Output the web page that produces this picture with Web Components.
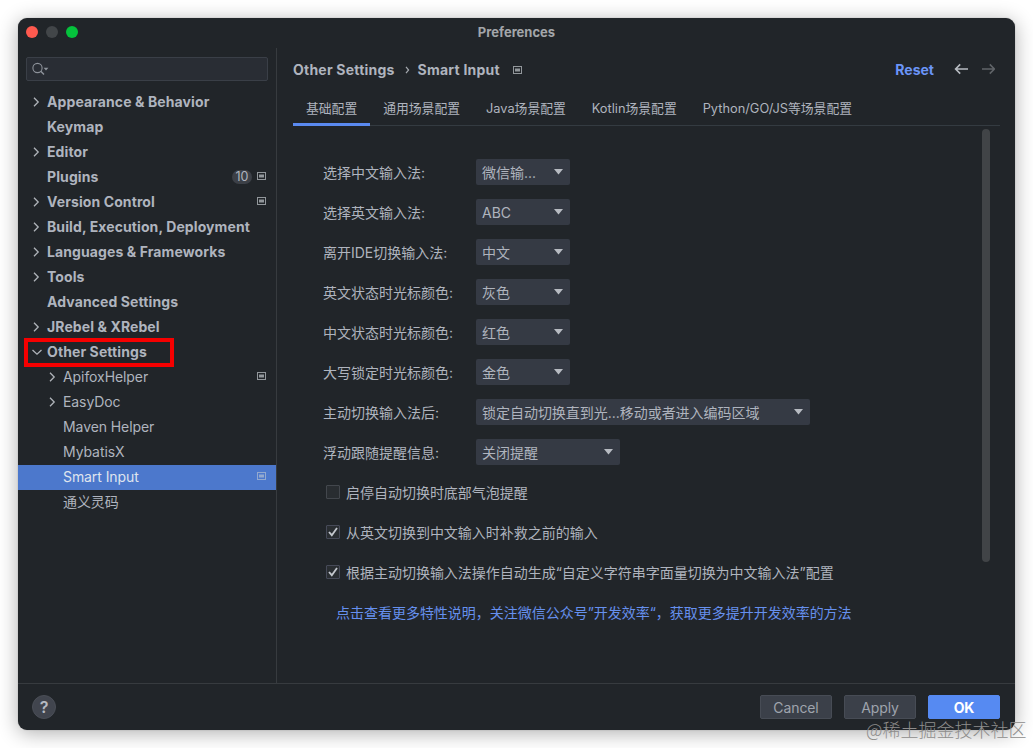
<!DOCTYPE html>
<html lang="zh-CN">
<head>
<meta charset="utf-8">
<title>Preferences</title>
<style>
  body {
    margin: 0;
    width: 1033px;
    height: 748px;
    overflow: hidden;
    position: relative;
    background: #fff;
    color: #afb4be;
    font: 14px/20px Inter, "Noto Sans CJK SC", sans-serif;
  }
</style>
</head>
<body>
<preferences-window>
  <settings-tree slot="sidebar">
    <tree-item arrow="right">Appearance &amp; Behavior</tree-item>
    <tree-item>Keymap</tree-item>
    <tree-item arrow="right">Editor</tree-item>
    <tree-item badge="10" project>Plugins</tree-item>
    <tree-item arrow="right" project>Version Control</tree-item>
    <tree-item arrow="right">Build, Execution, Deployment</tree-item>
    <tree-item arrow="right">Languages &amp; Frameworks</tree-item>
    <tree-item arrow="right">Tools</tree-item>
    <tree-item>Advanced Settings</tree-item>
    <tree-item arrow="right">JRebel &amp; XRebel</tree-item>
    <tree-item arrow="down" marked>Other Settings</tree-item>
    <tree-item child arrow="right" project>ApifoxHelper</tree-item>
    <tree-item child arrow="right">EasyDoc</tree-item>
    <tree-item child>Maven Helper</tree-item>
    <tree-item child>MybatisX</tree-item>
    <tree-item child selected project>Smart Input</tree-item>
    <tree-item child>通义灵码</tree-item>
  </settings-tree>

  <page-header slot="main"></page-header>
  <tab-bar slot="main">
    <tab-item active>基础配置</tab-item>
    <tab-item>通用场景配置</tab-item>
    <tab-item>Java场景配置</tab-item>
    <tab-item>Kotlin场景配置</tab-item>
    <tab-item>Python/GO/JS等场景配置</tab-item>
  </tab-bar>
  <settings-form slot="main">
    <select-row label="选择中文输入法:">微信输...</select-row>
    <select-row label="选择英文输入法:">ABC</select-row>
    <select-row label="离开IDE切换输入法:">中文</select-row>
    <select-row label="英文状态时光标颜色:">灰色</select-row>
    <select-row label="中文状态时光标颜色:">红色</select-row>
    <select-row label="大写锁定时光标颜色:">金色</select-row>
    <select-row label="主动切换输入法后:" style="--w:334px">锁定自动切换直到光...移动或者进入编码区域</select-row>
    <select-row label="浮动跟随提醒信息:" style="--w:144px">关闭提醒</select-row>
    <check-row>启停自动切换时底部气泡提醒</check-row>
    <check-row checked>从英文切换到中文输入时补救之前的输入</check-row>
    <check-row checked>根据主动切换输入法操作自动生成“自定义字符串字面量切换为中文输入法”配置</check-row>
    <link-row>点击查看更多特性说明，关注微信公众号”开发效率“，获取更多提升开发效率的方法</link-row>
  </settings-form>

  <push-button slot="actions">Cancel</push-button>
  <push-button slot="actions">Apply</push-button>
  <push-button slot="actions" primary>OK</push-button>
</preferences-window>
<water-mark>@稀土掘金技术社区</water-mark>

<script>
const projectIcon = `
  <svg class="project" width="9" height="8" viewBox="0 0 9 8">
    <rect x=".5" y=".5" width="8" height="7" fill="none" stroke="currentColor"/>
    <rect x="2" y="2.5" width="5" height="3" fill="currentColor"/>
  </svg>`;

// Every element renders its template once, when it is connected
class BaseElement extends HTMLElement {
  connectedCallback() {
    if (this.shadowRoot) return;
    this.attachShadow({ mode: "open" });
    this.shadowRoot.innerHTML = `<style>* { box-sizing: border-box; }${this.css()}</style>${this.html()}`;
  }
  css() {
    return "";
  }
  html() {
    return "<slot></slot>";
  }
}

class PreferencesWindow extends BaseElement {
  css() {
    return `
    :host {
      display: flex;
      flex-direction: column;
      box-sizing: border-box;
      width: 997px;
      height: 712px;
      margin: 18px;
      border-radius: 9px;
      background: #212529;
      box-shadow: 0 0 1px rgba(0, 0, 0, .4), 0 3px 20px rgba(0, 0, 0, .32);
    }
    header {
      display: grid;
      grid-template-columns: 1fr auto 1fr;
      align-items: center;
      height: 30px;
      flex: none;
      padding: 0 8px;
    }
    .lights { display: flex; gap: 8px; margin-top: -2px; }
    .lights i { width: 12px; height: 12px; border-radius: 50%; background: #ff5a4f; }
    .lights i:nth-child(2) { background: #424649; }
    .lights i:nth-child(3) { background: #05c23c; }
    h1 {
      margin: -3px 0 0;
      color: #a3a6aa;
      font-size: 13px;
      font-weight: 700;
    }
    .body { display: flex; flex: 1; min-height: 0; }
    aside { width: 259px; border-right: 1px solid #373b3f; }
    main { display: flex; flex-direction: column; flex: 1; min-width: 0; padding: 0 15px 0 16px; }
    footer {
      display: flex;
      align-items: center;
      gap: 12px;
      flex: none;
      height: 47px;
      padding: 0 15px 0 14px;
      border-top: 1px solid #373b3f;
    }
    .help {
      width: 24px;
      height: 24px;
      margin-right: auto;
      border: 1px solid #4a4e56;
      border-radius: 50%;
      background: #41454e;
      color: #b5bac2;
      font-size: 16px;
      font-weight: 600;
      line-height: 22px;
      text-align: center;
    }
    `;
  }
  html() {
    return `
    <header>
      <div class="lights"><i></i><i></i><i></i></div>
      <h1>Preferences</h1>
    </header>
    <div class="body">
      <aside><slot name="sidebar"></slot></aside>
      <main><slot name="main"></slot></main>
    </div>
    <footer>
      <div class="help">?</div>
      <slot name="actions"></slot>
    </footer>`;
  }
}

class SettingsTree extends BaseElement {
  css() {
    return `
    :host { display: block; padding-top: 9px; }
    .search {
      display: flex;
      align-items: center;
      height: 24px;
      margin: 0 8px 9px;
      padding-left: 5px;
      border: 1px solid #3a3f47;
      border-radius: 2px;
      background: #292d34;
      color: #8d929a;
    }
    `;
  }
  html() {
    return `
    <div class="search">
      <svg width="17" height="14" viewBox="0 0 17 14" fill="none" stroke="currentColor">
        <circle cx="5.5" cy="6" r="4.6" stroke-width="1.1"/>
        <path d="M8.8 9.3L12 12.5" stroke-width="1.5"/>
        <path d="M11.6 5.8h4.8L14 8.6z" fill="currentColor" stroke="none"/>
      </svg>
    </div>
    <slot></slot>`;
  }
}

class TreeItem extends BaseElement {
  css() {
    return `
    :host {
      display: flex;
      align-items: flex-start;
      box-sizing: border-box;
      position: relative;
      height: 25px;
      padding: 0 10px 0 13px;
      font-weight: 700;
      letter-spacing: .1px;
    }
    :host([child]) { padding-left: 29px; font-weight: 400; letter-spacing: -.08px; }
    :host([selected]) { background: #4c78cc; color: #dfe4ee; }
    .arrow { width: 16px; height: 12px; flex: none; margin-top: 6px; }
    .arrow svg { display: block; }
    .label { flex: 1; white-space: nowrap; line-height: 24px; }
    .badge {
      width: 20px;
      height: 14px;
      margin: 5px 5px 0 0;
      border-radius: 7px;
      background: #3c4047;
      font-size: 12.5px;
      font-weight: 400;
      line-height: 14px;
      text-align: center;
    }
    .project { color: #92979b; margin-top: 7px; }
    :host([selected]) .project { color: #93a9cf; }
    .mark {
      position: absolute;
      left: 6px;
      top: -2px;
      width: 150px;
      height: 29px;
      border: 4px solid #f60000;
    }
    `;
  }
  html() {
    const arrows = {
      right: "M3 1.8L7.2 6 3 10.2",
      down: "M1.5 4L6 8.2 10.5 4",
    };
    const arrow = arrows[this.getAttribute("arrow")];
    const badge = this.getAttribute("badge");
    return `
    <span class="arrow">
      ${arrow ? `<svg width="12" height="12" viewBox="0 0 12 12" fill="none" stroke="#b0b4ba" stroke-width="1.3"><path d="${arrow}"/></svg>` : ""}
    </span>
    <span class="label"><slot></slot></span>
    ${badge ? `<span class="badge">${badge}</span>` : ""}
    ${this.hasAttribute("project") ? projectIcon : ""}
    ${this.hasAttribute("marked") ? `<span class="mark"></span>` : ""}`;
  }
}

class PageHeader extends BaseElement {
  css() {
    return `
    :host {
      display: flex;
      align-items: center;
      height: 44px;
      flex: none;
      font-weight: 700;
    }
    .sep { margin: 0 8px 0 10px; }
    .crumb { letter-spacing: .22px; }
    .project { color: #92979b; margin-left: 13px; }
    .reset { margin-left: auto; color: #6b95f7; }
    .nav { margin: -2px 5px 0 20px; }
    `;
  }
  html() {
    return `
    <span class="crumb">Other Settings</span>
    <svg class="sep" width="5" height="8" viewBox="0 0 5 8" fill="none" stroke="#a5a9af" stroke-width="1.2"><path d="M1 .8L3.6 4 1 7.2"/></svg>
    <span class="crumb">Smart Input</span>
    ${projectIcon}
    <span class="reset">Reset</span>
    <svg class="nav" width="41" height="12" viewBox="0 0 41 12" fill="none" stroke-width="1.6">
      <path d="M14 6H2M6.2 1.4L1.6 6l4.6 4.6" stroke="#b7bbc1"/>
      <path d="M28 6h12M35.8 1.4L40.4 6l-4.6 4.6" stroke="#606468"/>
    </svg>`;
  }
}

class TabBar extends BaseElement {
  css() {
    return `
    :host {
      display: flex;
      flex: none;
      height: 34px;
      box-shadow: inset 0 -1px #343b41;
    }
    `;
  }
}

class TabItem extends BaseElement {
  css() {
    return `
    :host {
      box-sizing: border-box;
      height: 34px;
      padding: 0 13px;
      font-size: 12.8px;
      line-height: 33px;
      white-space: nowrap;
    }
    :host([active]) { border-bottom: 3px solid #5a8af0; }
    `;
  }
}

class SettingsForm extends BaseElement {
  css() {
    return `
    :host { display: flex; justify-content: space-between; flex: 1; padding: 3px 10px 0 30px; }
    .rows { padding-top: 23px; }
    .bar { width: 8px; height: 433px; border-radius: 4px; background: #414447; }
    `;
  }
  html() {
    return `
    <div class="rows"><slot></slot></div>
    <div class="bar"></div>`;
  }
}

class SelectRow extends BaseElement {
  css() {
    return `
    :host { display: flex; align-items: center; height: 40px; }
    label { width: 153px; padding-top: 2px; white-space: nowrap; }
    .box {
      display: flex;
      align-items: center;
      justify-content: space-between;
      width: var(--w, 94px);
      height: 26px;
      padding: 0 7px 0 6px;
      border-radius: 2px;
      background: #353a44;
      white-space: nowrap;
    }
    .value { padding-top: 2px; letter-spacing: -.03px; }
    `;
  }
  html() {
    return `
    <label>${this.getAttribute("label")}</label>
    <div class="box">
      <span class="value"><slot></slot></span>
      <svg width="9" height="6" viewBox="0 0 9 6"><path d="M0 0h9L4.5 5.5z" fill="#b7bbc2"/></svg>
    </div>`;
  }
}

class CheckRow extends BaseElement {
  css() {
    return `
    :host { display: flex; align-items: center; gap: 6px; height: 40px; padding-left: 3px; white-space: nowrap; }
    .box {
      width: 14px;
      height: 14px;
      border: 1px solid #43474d;
      border-radius: 1px;
      background: #292d31;
    }
    :host([checked]) .box { border-color: #464a58; }
    .box svg { display: block; }
    .text { padding-top: 2px; letter-spacing: -.02px; }
    `;
  }
  html() {
    const tick = this.hasAttribute("checked")
      ? `<svg width="12" height="12" viewBox="0 0 12 12" fill="none" stroke="#c3c7cd" stroke-width="1.8"><path d="M2 6l2.8 3.2L10 2"/></svg>`
      : "";
    return `<span class="box">${tick}</span><span class="text"><slot></slot></span>`;
  }
}

class LinkRow extends BaseElement {
  css() {
    return `
    :host {
      display: flex;
      align-items: center;
      box-sizing: border-box;
      height: 40px;
      padding: 2px 0 0 13px;
      color: #6690ee;
      letter-spacing: -.02px;
      white-space: nowrap;
    }
    `;
  }
}

class PushButton extends BaseElement {
  css() {
    return `
    :host {
      box-sizing: border-box;
      width: 72px;
      height: 24px;
      border: 1px solid #474c55;
      border-radius: 2px;
      background: #3b4049;
      color: #9fa4ad;
      line-height: 24px;
      letter-spacing: -.1px;
      text-align: center;
    }
    :host([primary]) { border-color: #568af2; background: #568af2; color: #fff; font-weight: 700; }
    `;
  }
}

class WaterMark extends BaseElement {
  css() {
    return `
    :host {
      position: absolute;
      left: 866px;
      top: 716px;
      color: #8e8d8c;
      font: 300 18px/26px "Noto Sans CJK SC", sans-serif;
      white-space: nowrap;
    }
    `;
  }
}

customElements.define("preferences-window", PreferencesWindow);
customElements.define("settings-tree", SettingsTree);
customElements.define("tree-item", TreeItem);
customElements.define("page-header", PageHeader);
customElements.define("tab-bar", TabBar);
customElements.define("tab-item", TabItem);
customElements.define("settings-form", SettingsForm);
customElements.define("select-row", SelectRow);
customElements.define("check-row", CheckRow);
customElements.define("link-row", LinkRow);
customElements.define("push-button", PushButton);
customElements.define("water-mark", WaterMark);
</script>
</body>
</html>
